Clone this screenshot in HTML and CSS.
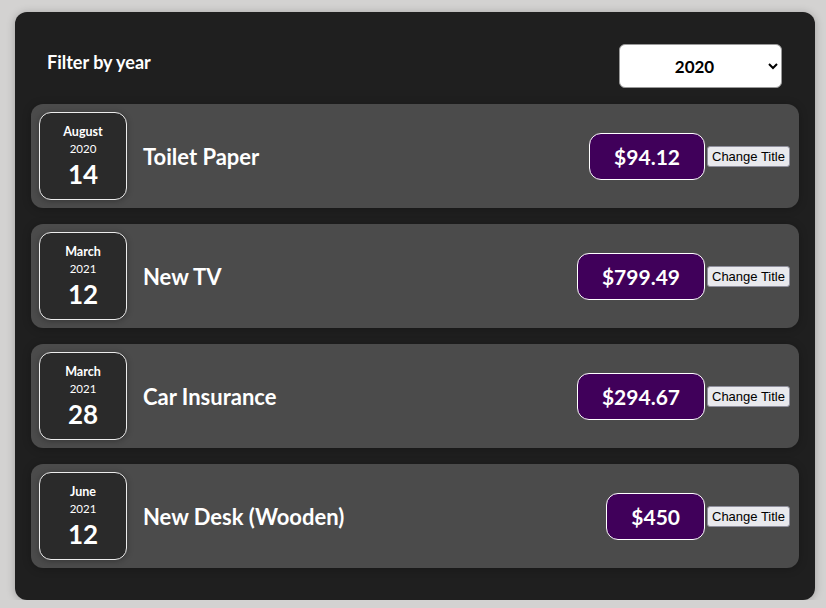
FILE: index.html
```html
<!DOCTYPE html>
<html>
<head>
<meta charset="utf-8">
<link rel="stylesheet" href="styles.css">
</head>
<body>
<div class="expenses">
  <div class="filter">
    <label class="filter-label">Filter by year</label>
    <select class="filter-select">
      <option>2020</option>
      <option>2021</option>
    </select>
  </div>
  <ul class="list">
    <li class="item">
      <div class="date"><div class="month">August</div><div class="year">2020</div><div class="day">14</div></div>
      <h2 class="title">Toilet Paper</h2>
      <div class="price">$94.12</div>
      <button class="btn">Change Title</button>
    </li>
    <li class="item">
      <div class="date"><div class="month">March</div><div class="year">2021</div><div class="day">12</div></div>
      <h2 class="title">New TV</h2>
      <div class="price">$799.49</div>
      <button class="btn">Change Title</button>
    </li>
    <li class="item">
      <div class="date"><div class="month">March</div><div class="year">2021</div><div class="day">28</div></div>
      <h2 class="title">Car Insurance</h2>
      <div class="price">$294.67</div>
      <button class="btn">Change Title</button>
    </li>
    <li class="item">
      <div class="date"><div class="month">June</div><div class="year">2021</div><div class="day">12</div></div>
      <h2 class="title">New Desk (Wooden)</h2>
      <div class="price">$450</div>
      <button class="btn">Change Title</button>
    </li>
  </ul>
</div>
</body>
</html>
```
FILE: styles.css
```css
html, body {
  margin: 0;
  padding: 0;
  background: #d3d2d1;
  font-family: "Lato", "Noto Sans", sans-serif;
}
.expenses {
  box-sizing: border-box;
  width: 800px;
  height: 588px;
  margin: 12px 11px 0 15px;
  padding: 16px;
  background: #1f1f1f;
  border-radius: 12px;
  box-shadow: 0 1px 8px rgba(0,0,0,0.25);
}
.filter {
  display: flex;
  align-items: center;
  justify-content: space-between;
  padding: 0 17px 0 16px;
  margin-top: 16px;
  height: 44px;
}
.filter-label {
  color: #fff;
  font-weight: 700;
  font-size: 18px;
  margin-top: -8px;
}
.filter-select {
  width: 163px;
  height: 44px;
  box-sizing: border-box;
  border-radius: 6px;
  border: 1px solid #999;
  background: #fff;
  font-family: inherit;
  font-weight: 700;
  font-size: 17px;
  text-align: center;
  color: #000;
}
.list {
  list-style: none;
  margin: 16px 0 0;
  padding: 0;
  display: flex;
  flex-direction: column;
  gap: 16px;
}
.item {
  display: flex;
  align-items: center;
  height: 104px;
  box-sizing: border-box;
  padding: 8px 9px 8px 8px;
  background: #4b4b4b;
  border-radius: 12px;
  box-shadow: 0 1px 8px rgba(0,0,0,0.25);
}
.date {
  box-sizing: border-box;
  width: 88px;
  height: 88px;
  flex: none;
  display: flex;
  flex-direction: column;
  align-items: center;
  justify-content: center;
  background: #2a2a2a;
  border: 1px solid #ececec;
  border-radius: 12px;
  color: #fff;
  box-shadow: 0 1px 6px rgba(0,0,0,0.3);
}
.month {
  font-size: 12.5px;
  font-weight: 700;
  line-height: 17px;
}
.year {
  font-size: 11.5px;
  line-height: 17px;
}
.day {
  font-size: 26px;
  font-weight: 700;
  line-height: 34px;
  margin-bottom: -2px;
}
.title {
  flex: 1;
  margin: 0 0 0 16px;
  font-size: 22px;
  font-weight: 700;
  color: #fff;
}
.price {
  box-sizing: border-box;
  height: 47px;
  display: flex;
  align-items: center;
  padding: 0 24px;
  background: #40005a;
  border: 1px solid #fff;
  border-radius: 12px;
  color: #fff;
  font-size: 21px;
  font-weight: 700;
}
.btn {
  margin-left: 2px;
  font-family: "Liberation Sans", Arial, sans-serif;
  font-size: 13px;
  padding: 1px 4px;
  height: 21px;
  border-radius: 3px;
  border: 1px solid #8f8f9d;
  background: #e9e9ed;
  color: #000;
}
```
